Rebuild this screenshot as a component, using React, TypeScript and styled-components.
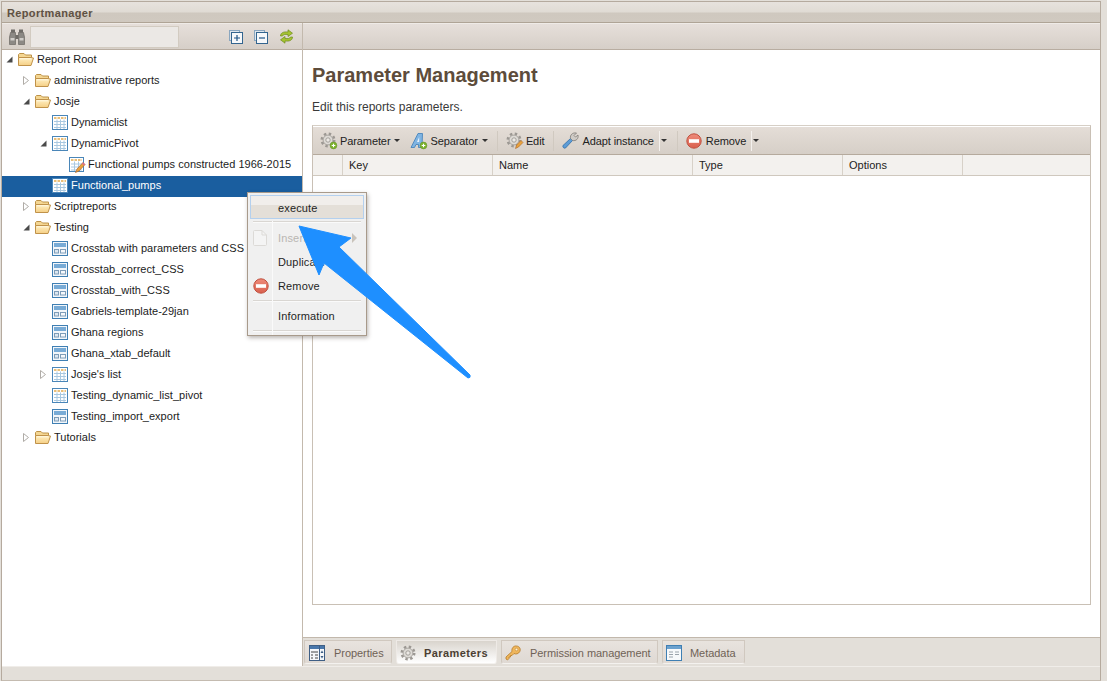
import React from 'react';
import styled, { createGlobalStyle } from 'styled-components';

const GlobalStyle = createGlobalStyle`
html, body { margin: 0; padding: 0; background: #e3dfd9; }
body { font-family: 'Liberation Sans', Arial, sans-serif; font-size: 11px; color: #1c1c1c; }
`;

const Page = styled.div`
position: relative;
width: 1107px;
height: 681px;
overflow: hidden;
background: #e3dfd9;
`;

const Frame = styled.div`
box-sizing: border-box;
width: 1100px;
height: 680px;
margin-top: 1px;
margin-left: 1px;
display: flex;
flex-direction: column;
border: 1px solid #b5aa9e;
border-bottom-color: #c4bbb0;
`;

const TitleBar = styled.div`
box-sizing: border-box;
height: 21px;
padding: 2px 0 0 5px;
display: flex;
align-items: center;
font-weight: bold;
font-size: 11px;
letter-spacing: 0.35px;
color: #5f5143;
background: linear-gradient(#e7e2dd 0, #e0dbd4 50%, #cfc8bf 55%, #d0c9c0 100%);
border-bottom: 1px solid #afa496;
`;

const Body = styled.div`
flex: none;
height: 643px;
display: flex;
`;

const LeftPanel = styled.div`
width: 300px;
flex: none;
display: flex;
flex-direction: column;
border-right: 1px solid #c3b9ad;
`;

const RightPanel = styled.div`
flex: 1;
min-width: 0;
display: flex;
flex-direction: column;
`;

const BarBackground = `
box-sizing: border-box;
height: 27px;
flex: none;
background: linear-gradient(#e6dfda, #d6cfc8);
border-top: 1px solid #efebe7;
border-bottom: 1px solid #b8ada1;
`;

const LeftToolbar = styled.div`
${BarBackground}
display: flex;
align-items: center;
padding-left: 7px;
svg { flex: none; }
`;

const SearchBox = styled.div`
box-sizing: border-box;
width: 149px;
flex: none;
height: 22px;
margin-left: 5px;
margin-right: 50px;
background: #ebe8e5;
border: 1px solid #d2cbc1;
`;

const TreeIconButton = styled.span`
width: 26px;
height: 18px;
flex: none;
margin-right: -1px;
display: flex;
align-items: center;
`;

const RightToolbar = styled.div`
${BarBackground}
`;

const Tree = styled.div`
flex: 1;
background: #fff;
overflow: hidden;
`;

const TreeRow = styled.div<{ $depth: number; $selected?: boolean }>`
box-sizing: border-box;
height: 21px;
display: flex;
align-items: center;
padding-bottom: 2px;
padding-left: ${p => 4 + p.$depth * 17}px;
color: ${p => (p.$selected ? '#fff' : '#1c1c1c')};
background: ${p => (p.$selected ? '#1a5e9f' : 'transparent')};
font-size: 11px;
white-space: nowrap;
`;

const Twist = styled.span`
width: 12px;
height: 10px;
flex: none;
display: flex;
align-items: center;
`;

const RowIcon = styled.span`
width: 17px;
flex: none;
display: flex;
align-items: center;
`;

const RowLabel = styled.span`
margin-left: 2px;
margin-bottom: 1px;
letter-spacing: 0.02px;
`;

const Content = styled.div`
flex: 1;
min-height: 0;
box-sizing: border-box;
background: #fff;
padding: 0 9px 32px 9px;
display: flex;
flex-direction: column;
`;

const Heading = styled.h1`
margin: 13px 0 0 0;
height: 25px;
line-height: 25px;
font-size: 20px;
font-weight: bold;
color: #5d4c3b;
letter-spacing: 0;
`;

const Intro = styled.p`
margin: 10px 0 0 0;
height: 18px;
line-height: 18px;
font-size: 12px;
color: #3a3a3a;
`;

const GridPanel = styled.div`
flex: 1;
margin-top: 9px;
border: 1px solid #c9c0b5;
border-top-color: #d6cfc6;
display: flex;
flex-direction: column;
`;

const GridToolbar = styled.div`
box-sizing: border-box;
height: 28px;
margin-top: 1px;
flex: none;
display: flex;
align-items: center;
padding-left: 7px;
background: linear-gradient(#e4ddd7, #d6cfc7);
border-bottom: 1px solid #b5aa9d;
`;

const ToolButton = styled.div<{ $offset?: number }>`
display: flex;
align-items: center;
gap: 2px;
height: 22px;
margin-left: ${p => p.$offset ?? 0}px;
color: #222;
font-size: 11px;
letter-spacing: -0.1px;
white-space: nowrap;
`;

const ToolIcon = styled.span`
width: 18px;
flex: none;
display: flex;
align-items: center;
`;

const Caret = styled.span`
width: 0;
height: 0;
margin-left: 2px;
border-left: 3px solid transparent;
border-right: 3px solid transparent;
border-top: 3px solid #333;
`;

const SplitCaret = styled.span`
box-sizing: border-box;
width: 9px;
height: 20px;
margin-left: 3px;
padding-left: 1px;
display: flex;
align-items: center;
border-left: 1px solid #f4f1ee;
&::after {
  content: '';
  width: 0;
  height: 0;
  border-left: 3px solid transparent;
  border-right: 3px solid transparent;
  border-top: 3px solid #333;
}
`;

const ToolSep = styled.span`
width: 1px;
height: 20px;
margin: 0 8px 0 9px;
flex: none;
background: #d0c9c0;
`;

const GridHeader = styled.div`
box-sizing: border-box;
height: 21px;
flex: none;
display: flex;
background: #f3f1ee;
border-bottom: 1px solid #cfc8be;
`;

const GridCol = styled.div<{ $width: number }>`
box-sizing: border-box;
width: ${p => p.$width}px;
flex: none;
padding-left: 6px;
display: flex;
align-items: center;
font-size: 11px;
color: #222;
border-right: 1px solid #d7d1c8;
`;

const GridBody = styled.div`
flex: 1;
background: #fff;
`;

const TabBar = styled.div`
box-sizing: border-box;
height: 29px;
flex: none;
display: flex;
padding-left: 1px;
padding-top: 2px;
gap: 4px;
border-top: 1px solid #c2b8ac;
background: #e3dfd9;
`;

const Tab = styled.div<{ $width: number; $pad: number; $gap: number; $active?: boolean }>`
box-sizing: border-box;
width: ${p => p.$width}px;
height: 24px;
display: flex;
align-items: center;
gap: ${p => p.$gap}px;
padding: 1px 0 0 ${p => p.$pad}px;
font-size: 11px;
font-weight: ${p => (p.$active ? 'bold' : 'normal')};
letter-spacing: ${p => (p.$active ? '0.4px' : '-0.05px')};
color: ${p => (p.$active ? '#4b3f33' : '#6f6256')};
background: ${p => (p.$active ? 'linear-gradient(#d9d4cd, #fff)' : 'linear-gradient(#e8e3de, #dfd9d3)')};
border: 1px solid ${p => (p.$active ? '#eeeae6' : '#d0c8bf')};
border-bottom-color: #f4f2ef;
border-radius: 0 0 3px 3px;
`;

const StatusBar = styled.div`
flex: 1;
background: #e3dfd9;
border-top: 1px solid #f0ede9;
`;

const Menu = styled.div`
position: absolute;
left: 247px;
top: 192px;
box-sizing: border-box;
width: 120px;
height: 144px;
padding: 2px;
background: #f0f0f0;
border: 1px solid #a89a8b;
box-shadow: 1px 2px 4px rgba(60, 50, 40, 0.35);
font-size: 11px;
&::before {
  content: '';
  position: absolute;
  left: 24px;
  top: 28px;
  bottom: 0;
  width: 1px;
  background: #fafafa;
}
`;

const MenuItem = styled.div<{ $hover?: boolean; $disabled?: boolean; $spaced?: number }>`
box-sizing: border-box;
height: 24px;
margin-top: ${p => p.$spaced ?? 0}px;
display: flex;
align-items: center;
padding-left: ${p => (p.$hover ? 27 : 3)}px;
padding-top: ${p => (p.$hover ? 1 : 0)}px;
color: ${p => (p.$disabled ? '#b9b6b2' : '#1f1f1f')};
letter-spacing: 0.15px;
${p =>
  p.$hover
    ? `
border: 1px solid #b4d0ee;
background: linear-gradient(#f1eeeb 0, #f1eeeb 40%, #e4dfd8 41%, #e4dfd8 100%);
`
    : ''}
`;

const MenuGlyph = styled.span`
width: 25px;
height: 18px;
flex: none;
display: flex;
align-items: center;
`;

const MenuSep = styled.div`
height: 1px;
margin: 2px 3px 0 3px;
background: #d9d6d2;
border-bottom: 1px solid #fafafa;
`;

const MenuArrow = styled.span`
margin-left: auto;
margin-right: 7px;
width: 0;
height: 0;
border-top: 5px solid transparent;
border-bottom: 5px solid transparent;
border-left: 5px solid #c9c3bb;
`;

const ArrowOverlay = styled.svg`
position: absolute;
left: 0;
top: 0;
pointer-events: none;
`;

const FolderIcon = () => (
  <svg width="16" height="15" viewBox="0 0 16 15">
    <defs>
      <linearGradient id="folderFront" x1="0" y1="0" x2="0" y2="1">
        <stop offset="0" stopColor="#fff0c4" />
        <stop offset="1" stopColor="#f5cf85" />
      </linearGradient>
    </defs>
    <path d="M0.5 2.5 L1.5 1.5 H6 L7.5 3 H13.5 V5.5 H0.5 Z" fill="#f4d692" stroke="#bd9248" />
    <path d="M0.5 13.5 V5.5 H12 L15.5 6 L13 13.5 Z" fill="url(#folderFront)" stroke="#c0924a" />
    <path d="M2 6.8 H13.5" stroke="#fff9e3" />
  </svg>
);

const TableIcon = () => (
  <svg width="16" height="15" viewBox="0 0 16 15">
    <rect x="0.5" y="0.5" width="15" height="14" fill="#fff" stroke="#4a86b8" />
    <path d="M2 3 H14" stroke="#e9be78" strokeWidth="2" strokeDasharray="2.5 1" />
    <path
      d="M2 6.5 H14 M2 9.5 H14 M2 12.5 H14 M5 4.5 V14 M8.5 4.5 V14 M12 4.5 V14"
      stroke="#a9c8e0"
      fill="none"
    />
  </svg>
);

const CrosstabIcon = () => (
  <svg width="16" height="15" viewBox="0 0 16 15">
    <rect x="0.5" y="0.5" width="15" height="14" fill="#f2f6fa" stroke="#3f7fb3" />
    <rect x="2" y="2" width="12" height="4" fill="#78abd6" />
    <rect x="2.5" y="8.5" width="4" height="3.5" fill="#dde7f0" stroke="#7d9cb8" />
    <rect x="8.5" y="8.5" width="5" height="3.5" fill="#f6f8fb" stroke="#7d9cb8" />
  </svg>
);

const EditTableIcon = () => (
  <svg width="17" height="16" viewBox="0 0 17 16">
    <rect x="0.5" y="0.5" width="14" height="14" fill="#fff" stroke="#4a86b8" />
    <path d="M2 3 H13" stroke="#e9be78" strokeWidth="2" strokeDasharray="2.5 1" />
    <path d="M2 7 H13 M2 10 H13 M2 13 H13 M5.5 4.5 V14 M9.5 4.5 V14" stroke="#a9c8e0" fill="none" />
    <path d="M6.5 15.5 L8 12 L14 5.5 L16 7.5 L10 14 Z" fill="#e9a23c" stroke="#b0662a" strokeWidth="0.7" />
    <path d="M13.5 6 L15.5 8" stroke="#d9679a" strokeWidth="1.4" />
  </svg>
);

const TwistIcon = ({ open }: { open?: boolean }) =>
  open ? (
    <svg width="7" height="7" viewBox="0 0 7 7">
      <path d="M0.5 6.5 H6.5 V0.5 Z" fill="#4a4a4a" />
    </svg>
  ) : (
    <svg width="6" height="9" viewBox="0 0 6 9">
      <path d="M0.5 0.5 L5.5 4.5 L0.5 8.5 Z" fill="#fff" stroke="#b0aca7" />
    </svg>
  );

const Binoculars = () => (
  <svg width="16" height="16" viewBox="0 0 16 16">
    <rect x="2" y="0.5" width="4" height="3" fill="#6f6c68" />
    <rect x="10" y="0.5" width="4" height="3" fill="#6f6c68" />
    <path d="M1.5 3.5 H6.5 V15.5 H0.5 V8 Z" fill="#8c8985" stroke="#605c58" strokeWidth="0.6" />
    <path d="M9.5 3.5 H14.5 L15.5 8 V15.5 H9.5 Z" fill="#8c8985" stroke="#605c58" strokeWidth="0.6" />
    <rect x="6.5" y="6" width="3" height="4" fill="#6f6c68" />
    <rect x="1.5" y="9" width="4" height="2.5" fill="#d0cdc9" />
    <rect x="10.5" y="9" width="4" height="2.5" fill="#d0cdc9" />
  </svg>
);

const PlusMinusBox = ({ plus }: { plus?: boolean }) => (
  <svg width="14" height="14" viewBox="0 0 14 14">
    <rect x="0.5" y="0.5" width="10" height="10" fill="#dfe7ee" stroke="#8aa6bf" />
    <rect x="2.5" y="2.5" width="11" height="11" fill="#f6f8fa" stroke="#33658f" />
    <path d={plus ? 'M5 8 H11 M8 5 V11' : 'M5 8 H11'} stroke="#1f5587" strokeWidth="1.2" />
  </svg>
);

const RefreshIcon = () => (
  <svg width="15" height="15" viewBox="0 0 15 15">
    <path d="M1.5 7 C1.5 3.5 5 2.5 9 3 V0.8 L13.5 4.2 L9 7.5 V5.5 C6 5.2 4 5.5 3.5 7 Z" fill="#a5c331" stroke="#6e8b1c" strokeWidth="0.7" />
    <path d="M13.5 8 C13.5 11.5 10 12.5 6 12 V14.2 L1.5 10.8 L6 7.5 V9.5 C9 9.8 11 9.5 11.5 8 Z" fill="#a5c331" stroke="#6e8b1c" strokeWidth="0.7" />
  </svg>
);

const GearShape = () => (
  <>
    <circle cx="8" cy="8" r="6.2" fill="none" stroke="#9c9893" strokeWidth="2.6" strokeDasharray="2.4 2.47" />
    <circle cx="8" cy="8" r="4.9" fill="#dedbd6" stroke="#9c9893" strokeWidth="0.8" />
    <circle cx="8" cy="8" r="2.2" fill="#ece9e5" stroke="#9c9893" strokeWidth="0.9" />
  </>
);

const Gear = () => (
  <svg width="16" height="16" viewBox="0 0 16 16">
    <GearShape />
  </svg>
);

const GreenPlus = () => (
  <>
    <circle cx="13.5" cy="13.5" r="3.4" fill="#7db32f" stroke="#5f8f1f" strokeWidth="0.5" />
    <path d="M11.7 13.5 H15.3 M13.5 11.7 V15.3" stroke="#fff" strokeWidth="1.1" />
  </>
);

const GearPlusIcon = () => (
  <svg width="18" height="18" viewBox="0 0 18 18">
    <GearShape />
    <GreenPlus />
  </svg>
);

const SeparatorIcon = () => (
  <svg width="18" height="18" viewBox="0 0 18 18">
    <path d="M1 15.5 L8 1.5 H12.5 L12 15.5 H8.5 V12.5 H6 L4.5 15.5 Z" fill="#7fb4e2" stroke="#3f7db8" strokeWidth="0.8" />
    <path d="M7 10 L9.2 5 V10 Z" fill="#e8f1fa" />
    <GreenPlus />
  </svg>
);

const GearEditIcon = () => (
  <svg width="18" height="18" viewBox="0 0 18 18">
    <GearShape />
    <path d="M9.5 16.5 L10.5 13 L15 8.5 L17 10.5 L12.5 15 Z" fill="#e9a23c" stroke="#a9652a" strokeWidth="0.6" />
  </svg>
);

const WrenchIcon = () => (
  <svg width="17" height="17" viewBox="0 0 17 17">
    <path d="M1 13.5 L9 6 L11 8 L3.5 16 C2 16.8 0.3 15 1 13.5 Z" fill="#5d9cd6" stroke="#2f6da8" strokeWidth="0.8" />
    <path d="M8.5 6.5 C7.8 3 10.5 0.3 14.5 1 L12 3.5 L13.5 5 L16 3 C16.8 6.8 14 9.3 10.5 8.5 Z" fill="#cfcbc6" stroke="#7f7b76" strokeWidth="0.8" />
  </svg>
);

const RemoveIcon = ({ id }: { id: string }) => (
  <svg width="16" height="16" viewBox="0 0 16 16">
    <defs>
      <linearGradient id={id} x1="0" y1="0" x2="0" y2="1">
        <stop offset="0" stopColor="#ee8b7a" />
        <stop offset="1" stopColor="#d9604e" />
      </linearGradient>
    </defs>
    <circle cx="8" cy="8" r="7.2" fill={`url(#${id})`} stroke="#c0503f" strokeWidth="1" />
    <rect x="3" y="6.2" width="10" height="3.6" fill="#fff" />
  </svg>
);

const PropertiesIcon = () => (
  <svg width="16" height="16" viewBox="0 0 16 16">
    <rect x="0.5" y="0.5" width="15" height="15" fill="#f5f7fa" stroke="#3f5f85" />
    <rect x="1" y="1" width="14" height="3" fill="#4977ab" />
    <path d="M2 7 H9 M2 10 H4 M6 10 H9 M2 13 H4 M6 13 H9" stroke="#444" />
    <path d="M10.5 1 V15" stroke="#3f5f85" />
    <path d="M13 5.5 L11.5 8 H14.5 Z M13 13.5 L11.5 11 H14.5 Z" fill="#3f5f85" />
  </svg>
);

const KeyIcon = () => (
  <svg width="16" height="16" viewBox="0 0 16 16">
    <path d="M1 14 V12 L7 6.5 C6.2 3 9 0.5 11.5 1 C14.5 1.2 16 4 14.8 6.5 C13.5 9 10.8 9.5 9 8.5 L7 10.5 H5.5 V12 H4 V13.5 L2.5 15 Z" fill="#efb65c" stroke="#b67a26" strokeWidth="0.8" />
    <circle cx="11.5" cy="4.5" r="1.3" fill="#fff3d6" stroke="#b67a26" strokeWidth="0.5" />
  </svg>
);

const MetadataIcon = () => (
  <svg width="16" height="16" viewBox="0 0 16 16">
    <rect x="0.5" y="0.5" width="15" height="15" fill="#f7f9fb" stroke="#3f7fb3" />
    <rect x="1" y="1" width="14" height="3" fill="#6ba1ce" />
    <path d="M3 7 H7 M3 9.5 H7 M3 12 H7 M9 7 H13 M9 9.5 H13" stroke="#9aa3ab" />
  </svg>
);

const PageIcon = () => (
  <svg width="14" height="16" viewBox="0 0 14 16">
    <path d="M0.5 1.5 Q0.5 0.5 1.5 0.5 H9 L13.5 5 V14.5 Q13.5 15.5 12.5 15.5 H1.5 Q0.5 15.5 0.5 14.5 Z" fill="#f4f4f4" stroke="#dcdad7" />
    <path d="M9 0.5 V5 H13.5" fill="none" stroke="#dcdad7" />
  </svg>
);

type NodeKind = 'folder' | 'table' | 'crosstab' | 'edit';

interface Node {
  label: string;
  depth: number;
  kind: NodeKind;
  twist?: 'open' | 'closed';
  selected?: boolean;
}

const nodes: Node[] = [
  { label: 'Report Root', depth: 0, kind: 'folder', twist: 'open' },
  { label: 'administrative reports', depth: 1, kind: 'folder', twist: 'closed' },
  { label: 'Josje', depth: 1, kind: 'folder', twist: 'open' },
  { label: 'Dynamiclist', depth: 2, kind: 'table' },
  { label: 'DynamicPivot', depth: 2, kind: 'table', twist: 'open' },
  { label: 'Functional pumps constructed 1966-2015', depth: 3, kind: 'edit' },
  { label: 'Functional_pumps', depth: 2, kind: 'table', selected: true },
  { label: 'Scriptreports', depth: 1, kind: 'folder', twist: 'closed' },
  { label: 'Testing', depth: 1, kind: 'folder', twist: 'open' },
  { label: 'Crosstab with parameters and CSS', depth: 2, kind: 'crosstab' },
  { label: 'Crosstab_correct_CSS', depth: 2, kind: 'crosstab' },
  { label: 'Crosstab_with_CSS', depth: 2, kind: 'crosstab' },
  { label: 'Gabriels-template-29jan', depth: 2, kind: 'crosstab' },
  { label: 'Ghana regions', depth: 2, kind: 'crosstab' },
  { label: 'Ghana_xtab_default', depth: 2, kind: 'crosstab' },
  { label: "Josje's list", depth: 2, kind: 'table', twist: 'closed' },
  { label: 'Testing_dynamic_list_pivot', depth: 2, kind: 'table' },
  { label: 'Testing_import_export', depth: 2, kind: 'crosstab' },
  { label: 'Tutorials', depth: 1, kind: 'folder', twist: 'closed' },
];

const kindIcons: Record<NodeKind, React.ReactNode> = {
  folder: <FolderIcon />,
  table: <TableIcon />,
  crosstab: <CrosstabIcon />,
  edit: <EditTableIcon />,
};

const columns = [
  { label: '', width: 30 },
  { label: 'Key', width: 150 },
  { label: 'Name', width: 200 },
  { label: 'Type', width: 150 },
  { label: 'Options', width: 120 },
];

export default function App() {
  return (
    <Page>
      <GlobalStyle />
      <Frame>
        <TitleBar>Reportmanager</TitleBar>
        <Body>
          <LeftPanel>
            <LeftToolbar>
              <Binoculars />
              <SearchBox />
              <TreeIconButton><PlusMinusBox plus /></TreeIconButton>
              <TreeIconButton><PlusMinusBox /></TreeIconButton>
              <TreeIconButton><RefreshIcon /></TreeIconButton>
            </LeftToolbar>
            <Tree>
              {nodes.map(node => (
                <TreeRow key={node.label} $depth={node.depth} $selected={node.selected}>
                  <Twist>{node.twist && <TwistIcon open={node.twist === 'open'} />}</Twist>
                  <RowIcon>{kindIcons[node.kind]}</RowIcon>
                  <RowLabel>{node.label}</RowLabel>
                </TreeRow>
              ))}
            </Tree>
          </LeftPanel>
          <RightPanel>
            <RightToolbar />
            <Content>
              <Heading>Parameter Management</Heading>
              <Intro>Edit this reports parameters.</Intro>
              <GridPanel>
                <GridToolbar>
                  <ToolButton><ToolIcon><GearPlusIcon /></ToolIcon>Parameter<Caret /></ToolButton>
                  <ToolButton $offset={10}><ToolIcon><SeparatorIcon /></ToolIcon>Separator<Caret /></ToolButton>
                  <ToolSep />
                  <ToolButton><ToolIcon><GearEditIcon /></ToolIcon>Edit</ToolButton>
                  <ToolSep />
                  <ToolButton><ToolIcon><WrenchIcon /></ToolIcon>Adapt instance<SplitCaret /></ToolButton>
                  <ToolSep />
                  <ToolButton><ToolIcon><RemoveIcon id="removeTool" /></ToolIcon>Remove<SplitCaret /></ToolButton>
                </GridToolbar>
                <GridHeader>
                  {columns.map(col => (
                    <GridCol key={col.label || 'blank'} $width={col.width}>{col.label}</GridCol>
                  ))}
                </GridHeader>
                <GridBody />
              </GridPanel>
            </Content>
            <TabBar>
              <Tab $width={88} $pad={4} $gap={9}><PropertiesIcon />Properties</Tab>
              <Tab $width={101} $pad={3} $gap={8} $active><Gear />Parameters</Tab>
              <Tab $width={157} $pad={3} $gap={9}><KeyIcon />Permission management</Tab>
              <Tab $width={83} $pad={3} $gap={8}><MetadataIcon />Metadata</Tab>
            </TabBar>
          </RightPanel>
        </Body>
        <StatusBar />
      </Frame>
      <Menu>
        <MenuItem $hover>execute</MenuItem>
        <MenuSep />
        <MenuItem $disabled $spaced={3}>
          <MenuGlyph><PageIcon /></MenuGlyph>Insert<MenuArrow />
        </MenuItem>
        <MenuItem><MenuGlyph />Duplicate</MenuItem>
        <MenuItem>
          <MenuGlyph><RemoveIcon id="removeMenu" /></MenuGlyph>Remove
        </MenuItem>
        <MenuSep />
        <MenuItem $spaced={2}><MenuGlyph />Information</MenuItem>
        <MenuSep />
      </Menu>
      <ArrowOverlay width="1107" height="681" viewBox="0 0 1107 681">
        <path
          d="M299 226 L351 238 L339 247 L470 375 Q471 378 468 378 L324 263 L319 275 Z"
          fill="#1e8fff"
          stroke="#1e8fff"
          strokeWidth="1"
          strokeLinejoin="round"
        />
      </ArrowOverlay>
    </Page>
  );
}
